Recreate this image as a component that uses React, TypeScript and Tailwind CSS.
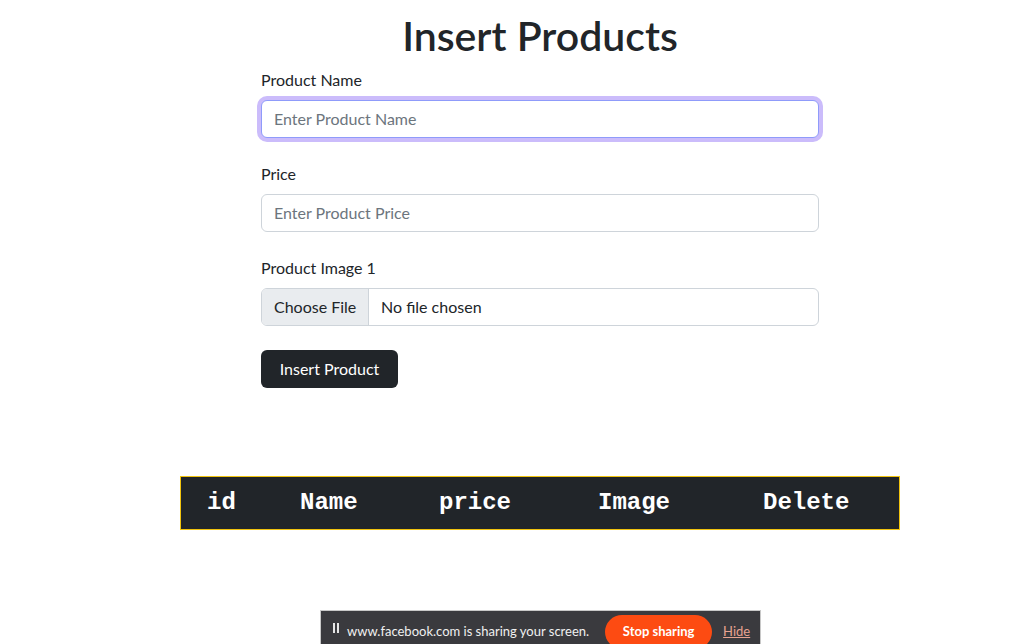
export default function App() {
  return (
    <div className="relative min-h-[644px] bg-white font-['Lato','Noto_Sans',sans-serif] text-[#212529]">
      <div className="ml-[261px] w-[558px] pt-[12px]">
        <h1 className="mb-2 text-center text-[41px] font-semibold leading-[47px]">
          Insert Products
        </h1>

        <div className="mb-6">
          <label className="mb-2 block text-base leading-[25px]">Product Name</label>
          <div className="h-[38px] rounded-[6px] border border-[#8f9bfa] bg-white px-3 text-base leading-[36px] text-[#6c757d] shadow-[0_0_0_4px_#cbbcfb]">
            Enter Product Name
          </div>
        </div>

        <div className="mb-6">
          <label className="mb-2 block text-base leading-6">Price</label>
          <div className="h-[38px] rounded-[6px] border border-[#ced4da] bg-white px-3 text-base leading-[36px] text-[#6c757d]">
            Enter Product Price
          </div>
        </div>

        <div className="mb-6">
          <label className="mb-2 block text-base leading-6">Product Image 1</label>
          <div className="flex h-[38px] overflow-hidden whitespace-nowrap rounded-[6px] border border-[#ced4da] bg-white text-base leading-[36px]">
            <span className="w-[107px] shrink-0 border-r border-[#ced4da] bg-[#e9ecef] px-3">Choose File</span>
            <span className="px-3">No file chosen</span>
          </div>
        </div>

        <button
          type="button"
          className="h-[38px] w-[137px] rounded-[6px] bg-[#212529] text-base text-white"
        >
          Insert Product
        </button>
      </div>

      <div className="ml-[180px] mt-[88px] w-[720px] border border-[#f1c40f] bg-[#212529]">
        <div className="flex h-[52px] items-center pl-[26px] font-['Liberation_Mono',monospace] text-[24px] font-bold text-white">
          <span className="w-[93px]">id</span>
          <span className="w-[139px]">Name</span>
          <span className="w-[159px]">price</span>
          <span className="w-[165px]">Image</span>
          <span>Delete</span>
        </div>
      </div>

      <div className="fixed bottom-[-8px] left-[320px] flex h-[42px] w-[441px] items-start whitespace-nowrap border border-[#c8c8c8] bg-[#3a3a3e] pl-[12px] pt-[4px] text-[13px] text-[#f0f0f0]">
        <span className="mt-[8px] mr-[8px] flex gap-[2px]">
          <span className="h-[10px] w-[2px] bg-[#e6e6e6]" />
          <span className="h-[10px] w-[2px] bg-[#e6e6e6]" />
        </span>
        <span className="mt-[8px] leading-[17px]">www.facebook.com is sharing your screen.</span>
        <span className="ml-[16px] flex h-[34px] w-[107px] items-center justify-center rounded-full bg-[#fd4b12] text-[13px] font-bold text-white">
          Stop sharing
        </span>
        <span className="mt-[8px] ml-[11px] leading-[17px] text-[#e8a391] underline">Hide</span>
      </div>
    </div>
  );
}
